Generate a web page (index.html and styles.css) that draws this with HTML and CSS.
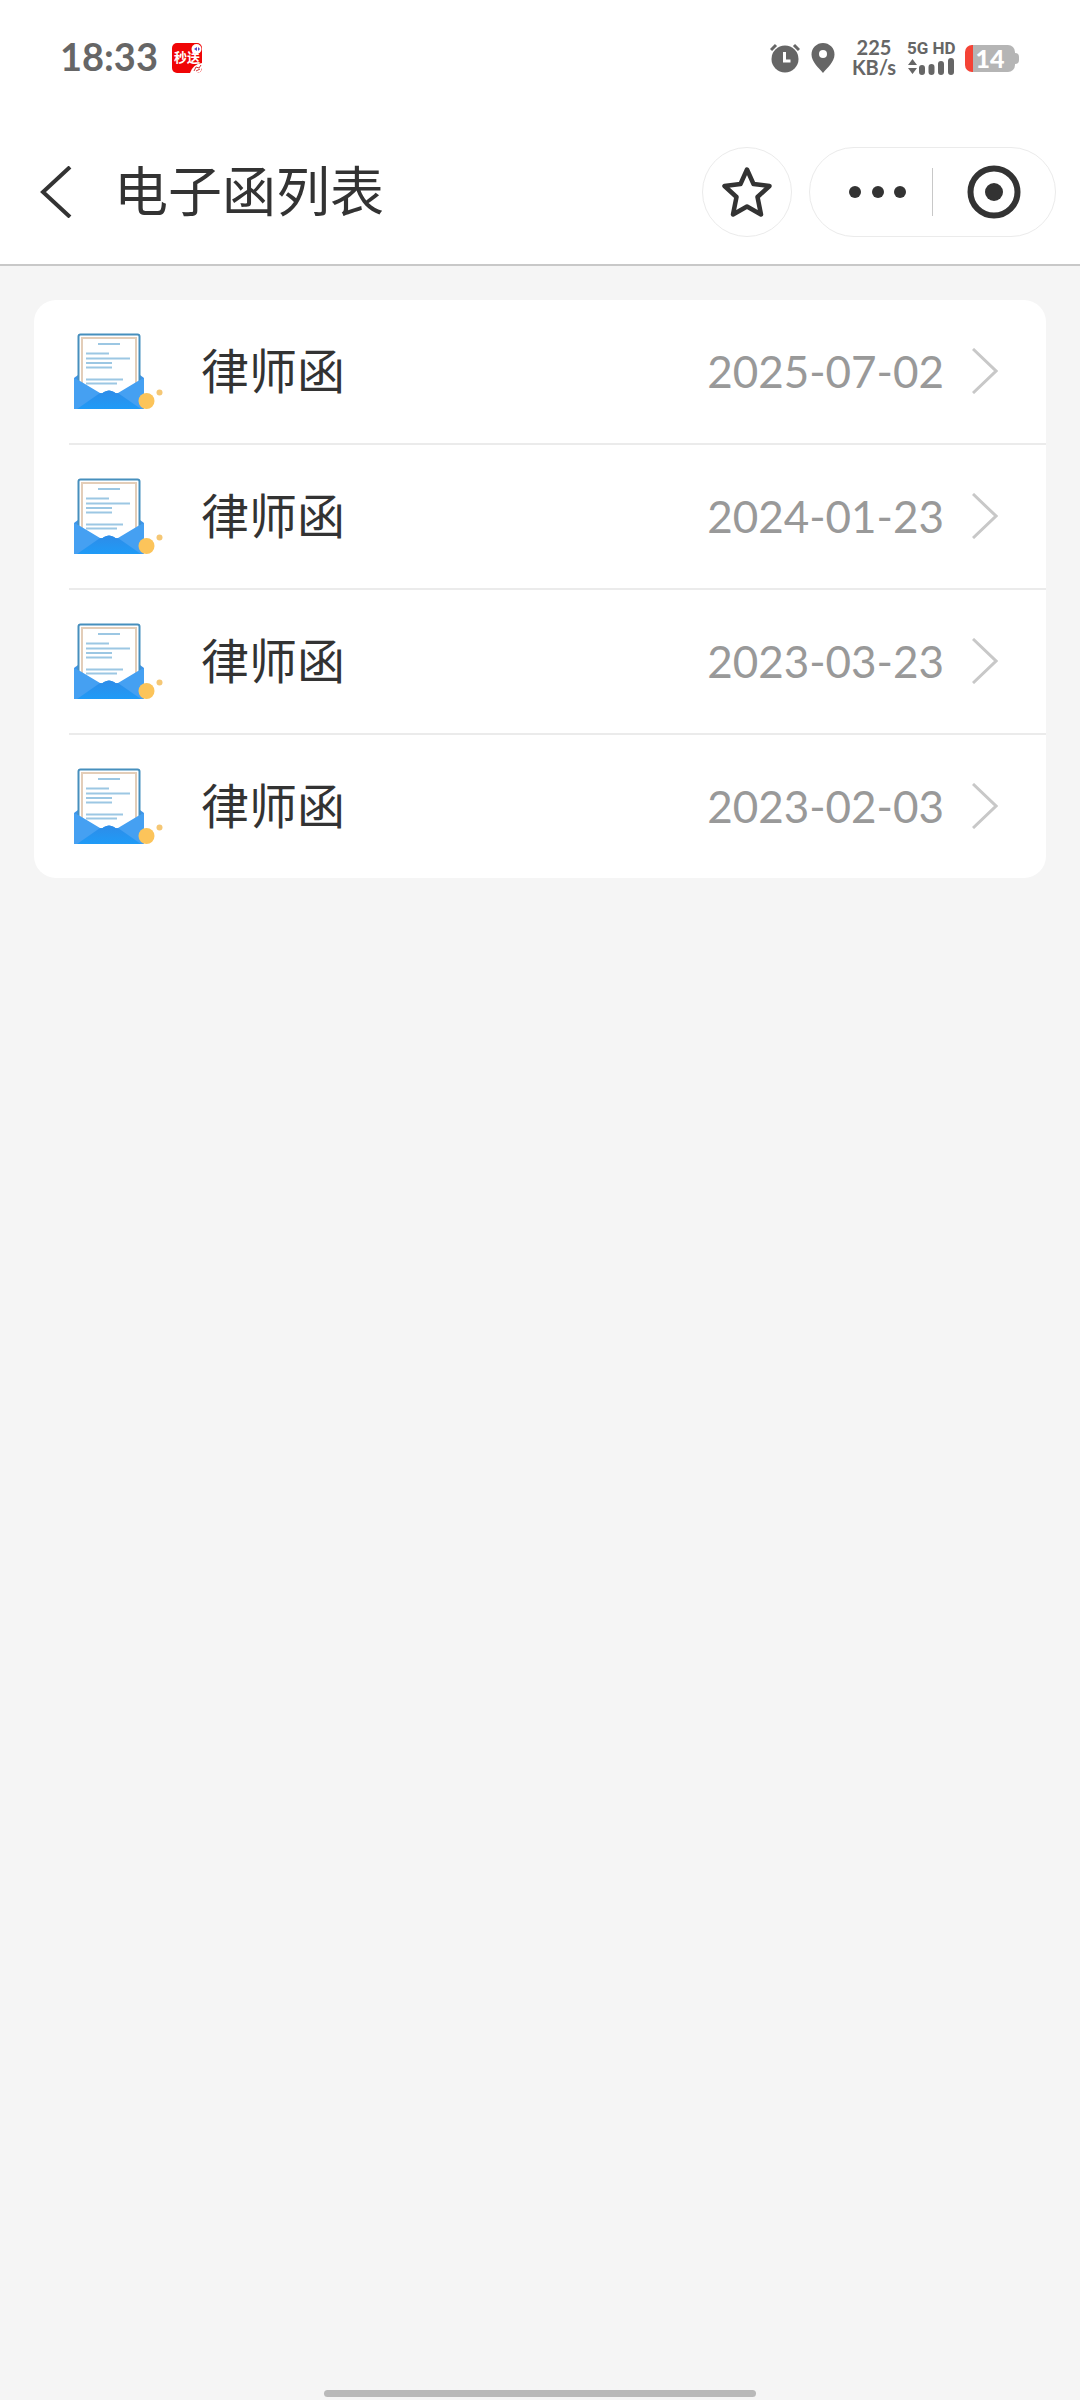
FILE: index.html
```html
<!DOCTYPE html>
<html lang="zh-CN">
<head>
  <meta charset="UTF-8" />
  <meta name="viewport" content="width=device-width, initial-scale=1.0"/>
  <title>电子函列表</title>
  <link rel="stylesheet" href="styles.css">
</head>
<body>
  <!-- shared symbols for the list rows -->
  <svg class="symbols" aria-hidden="true">
    <linearGradient id="flap" x1="0" y1="0" x2="0" y2="1">
      <stop offset="0" stop-color="#2e8ce8"/>
      <stop offset="1" stop-color="#1f9bf7"/>
    </linearGradient>
    <symbol id="letter" viewBox="0 2 90 76">
      <path d="M0 47l4-3h62l4 3v31H0z" fill="#3d94e8"/>
      <rect x="4.500" y="3.500" width="61" height="60" rx="2" fill="#fff" stroke="#478fbd" stroke-width="2"/>
      <path d="M8 60V7h54v53" fill="none" stroke="#e3cdb8" stroke-width="2"/>
      <g stroke="#9cc7e3" stroke-width="2">
        <path d="M24 13h22M12 22.500h23M12 27.500h44M12 32h26M12 36.500h26M12 48.500h37M12 52.500h31"/>
      </g>
      <path d="M0 47l6 3 20 12q2 1 4-1 5-3 10 0 2 2 4 1l20-12 6-3v31H0z" fill="#45a0f2"/>
      <path d="M3 78l23-16q2 1 4-1 5-3 10 0 2 2 4 1l23 16z" fill="url(#flap)"/>
      <circle cx="72.500" cy="70" r="8" fill="#fcc45a"/>
      <circle cx="85.500" cy="61.500" r="3" fill="#f5c775"/>
    </symbol>
    <symbol id="arrow" viewBox="0 0 26 46">
      <path d="M1 1l23 22L1 45" fill="none" stroke="#c8c8c8" stroke-width="3"/>
    </symbol>
  </svg>

  <header class="header">
    <div class="status-bar">
      <div class="status-left">
        <span class="clock">18:33</span>
        <span class="app-badge">秒送
          <svg viewBox="0 0 30 30" aria-hidden="true">
            <circle cx="24.500" cy="6" r="5" fill="#fff"/>
            <path d="M22 6l3-2v4zM26 4l2 2-2 2z" fill="#5548c8"/>
            <path d="M18 30q3-9 12-10v5q-1 5-5 5z" fill="#fff"/>
            <path d="M22 28l2-4 3 1 2-3M24 28l4-2" fill="none" stroke="#c33" stroke-width="1"/>
          </svg>
        </span>
      </div>
      <div class="status-right">
        <svg class="alarm" viewBox="0 0 30 30" aria-hidden="true">
          <circle cx="15" cy="16" r="13.500" fill="#666"/>
          <path d="M1 7l5-5M29 7l-5-5" stroke="#666" stroke-width="3"/>
          <path d="M14.500 9v9h6" fill="none" stroke="#fff" stroke-width="3"/>
        </svg>
        <svg class="pin" viewBox="0 0 24 30" aria-hidden="true">
          <path d="M12 0a11.500 11.500 0 0 0-11.500 11.500C.5 19 8 25 12 30c4-5 11.500-11 11.500-18.500A11.500 11.500 0 0 0 12 0z" fill="#666"/>
          <circle cx="12" cy="11" r="4" fill="#fff"/>
        </svg>
        <span class="speed"><span>225</span><span>KB/s</span></span>
        <span class="network">
          <span>5G HD</span>
          <svg viewBox="0 0 48 18" aria-hidden="true">
            <path d="M1 8l4.500-6L10 8zM1 11h9l-4.500 6z" fill="#666"/>
            <path d="M15 11v4M24.500 10v5M34 7v8M44 4v11" stroke="#666" stroke-width="6" stroke-linecap="round"/>
          </svg>
        </span>
        <span class="battery"><span class="battery-level">14</span></span>
      </div>
    </div>

    <nav class="navbar">
      <button class="back" aria-label="返回">
        <svg viewBox="0 0 32 52" aria-hidden="true">
          <path d="M30 1L3 26l27 25" fill="none" stroke="#333" stroke-width="4"/>
        </svg>
      </button>
      <h1 class="title">电子函列表</h1>
      <button class="favorite" aria-label="收藏">
        <svg viewBox="0 0 50 52" aria-hidden="true">
          <path d="M25 3.500l6.500 14.500 16 2-12 11 3.500 17.500-14-8-14 8L14.500 31l-12-11 16-2z" fill="none" stroke="#333" stroke-width="4.500" stroke-linejoin="round"/>
        </svg>
      </button>
      <div class="capsule">
        <button class="more" aria-label="更多">
          <svg viewBox="0 0 58 12" aria-hidden="true">
            <g fill="#333">
              <circle cx="6" cy="6" r="6"/>
              <circle cx="29" cy="6" r="6"/>
              <circle cx="51" cy="6" r="6"/>
            </g>
          </svg>
        </button>
        <button class="close" aria-label="关闭">
          <svg viewBox="0 0 54 54" aria-hidden="true">
            <circle cx="27" cy="27" r="23.500" fill="none" stroke="#333" stroke-width="6"/>
            <circle cx="27" cy="27" r="9" fill="#333"/>
          </svg>
        </button>
      </div>
    </nav>
  </header>

  <main class="content">
    <ul class="letters">
      <li><a href="#" class="letter">
        <svg class="letter-icon" aria-hidden="true"><use href="#letter"/></svg>
        <span class="letter-name">律师函</span>
        <time class="letter-date">2025-07-02</time>
        <svg class="arrow" aria-hidden="true"><use href="#arrow"/></svg>
      </a></li>
      <li><a href="#" class="letter">
        <svg class="letter-icon" aria-hidden="true"><use href="#letter"/></svg>
        <span class="letter-name">律师函</span>
        <time class="letter-date">2024-01-23</time>
        <svg class="arrow" aria-hidden="true"><use href="#arrow"/></svg>
      </a></li>
      <li><a href="#" class="letter">
        <svg class="letter-icon" aria-hidden="true"><use href="#letter"/></svg>
        <span class="letter-name">律师函</span>
        <time class="letter-date">2023-03-23</time>
        <svg class="arrow" aria-hidden="true"><use href="#arrow"/></svg>
      </a></li>
      <li><a href="#" class="letter">
        <svg class="letter-icon" aria-hidden="true"><use href="#letter"/></svg>
        <span class="letter-name">律师函</span>
        <time class="letter-date">2023-02-03</time>
        <svg class="arrow" aria-hidden="true"><use href="#arrow"/></svg>
      </a></li>
    </ul>
  </main>

  <div class="home-bar"></div>
</body>
</html>
```

FILE: styles.css
```css
* {
  box-sizing: border-box;
}

body {
  font-family: Lato, "Noto Sans CJK SC", sans-serif;
  margin: 0;
  min-height: 100vh;
  display: flex;
  flex-direction: column;
  background: #f5f5f5;
  color: #333;
}

svg {
  display: block;
  flex: none;
}

button {
  display: flex;
  align-items: center;
  justify-content: center;
  padding: 0;
  border: none;
  background: none;
  cursor: pointer;
}

.symbols {
  position: absolute;
  width: 0;
  height: 0;
}

.header {
  background: #fff;
  border-bottom: 2px solid #c8c8c8;
}

/* status bar */
.status-bar {
  display: flex;
  justify-content: space-between;
  align-items: center;
  height: 118px;
  padding: 0 61px 2px 60px;
  color: #666;
}

.status-left,
.status-right {
  display: flex;
  align-items: center;
}

.status-left {
  gap: 14px;
}

.clock {
  padding-bottom: 4px;
  font-size: 38px;
  font-weight: bold;
  line-height: 40px;
}

.app-badge {
  position: relative;
  width: 30px;
  height: 30px;
  border-radius: 5px;
  overflow: hidden;
  background: #f00506;
  color: #fff;
  font-size: 13px;
  font-weight: bold;
  line-height: 28px;
  text-align: center;
}

.app-badge svg {
  position: absolute;
  inset: 0;
}

.alarm {
  width: 30px;
  height: 30px;
  margin-right: 11px;
}

.pin {
  width: 24px;
  height: 30px;
  margin-right: 16px;
}

.speed {
  display: flex;
  flex-direction: column;
  align-items: center;
  width: 46px;
  margin-right: 10px;
  padding-bottom: 2px;
  font-size: 20px;
  font-weight: bold;
  line-height: 20px;
}

.network {
  display: flex;
  flex-direction: column;
  width: 48px;
  margin-right: 10px;
  padding-bottom: 2px;
  font-family: Roboto, sans-serif;
  font-size: 17px;
  font-weight: bold;
  line-height: 18px;
  white-space: nowrap;
}

.network svg {
  width: 48px;
  height: 18px;
}

.battery {
  position: relative;
  width: 50px;
  height: 27px;
  margin-right: 4px;
  border-radius: 7px;
  background: linear-gradient(to right, #f44336 16%, #b5b5b5 16%);
  color: #fff;
  font-size: 25px;
  font-weight: 900;
  line-height: 26px;
  text-align: center;
}

.battery::after {
  content: "";
  position: absolute;
  left: 100%;
  top: 8px;
  width: 4px;
  height: 11px;
  border-radius: 0 4px 4px 0;
  background: #b5b5b5;
}

/* title bar */
.navbar {
  display: flex;
  align-items: center;
  height: 146px;
  padding: 2px 24px 0 40px;
}

.back svg {
  width: 32px;
  height: 52px;
}

.title {
  flex: 1;
  margin: 0 0 0 42px;
  font-size: 54px;
  font-weight: normal;
  line-height: 72px;
}

.favorite,
.capsule {
  height: 90px;
  border: 1px solid #ebebeb;
  border-radius: 45px;
}

.favorite {
  width: 90px;
  margin-right: 17px;
}

.favorite svg {
  width: 50px;
  height: 52px;
}

.capsule {
  display: flex;
  align-items: center;
  width: 247px;
}

.capsule button {
  width: 50%;
  height: 48px;
}

.capsule .more {
  padding-left: 14px;
  border-right: 1px solid #c8c8c8;
}

.more svg {
  width: 58px;
  height: 12px;
}

.close svg {
  width: 54px;
  height: 54px;
}

/* letter list */
.content {
  flex: 1;
  padding: 34px;
}

.letters {
  list-style: none;
  margin: 0;
  padding: 0 0 0 35px;
  border-radius: 22px;
  background: #fff;
}

.letters li + li {
  border-top: 2px solid #ebebeb;
}

.letter {
  display: flex;
  align-items: center;
  height: 143px;
  padding: 0 48px 2px 5px;
  color: #333;
  text-decoration: none;
}

.letter-icon {
  width: 90px;
  height: 76px;
}

.letter-name {
  flex: 1;
  margin-left: 37px;
  font-size: 48px;
  line-height: 64px;
}

.letter-date {
  margin-right: 28px;
  color: #999;
  font-size: 44px;
  line-height: 64px;
}

.arrow {
  width: 26px;
  height: 46px;
}

.home-bar {
  width: 40%;
  height: 7px;
  margin: 0 auto 3px;
  border-radius: 4px;
  background: #b9b9b9;
}
```
